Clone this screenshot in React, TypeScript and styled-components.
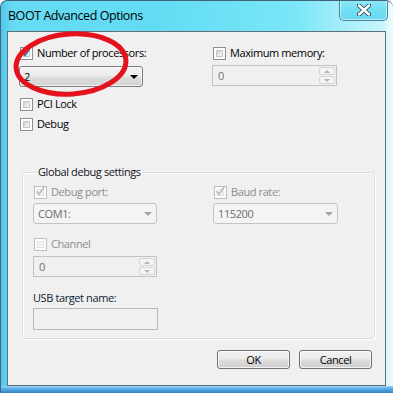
import React from "react";
import styled, { createGlobalStyle } from "styled-components";

const Global = createGlobalStyle`
  html, body { margin: 0; padding: 0; width: 393px; height: 393px; overflow: hidden; background: #fff; }
  body { font-family: "Open Sans", "Noto Sans", sans-serif; font-size: 11px; letter-spacing: -0.4px; color: #000; }
  * { box-sizing: border-box; }
`;

const Window = styled.div`
  position: relative;
  width: 393px;
  height: 393px;
  display: flex;
  flex-direction: column;
  border-left: 1px solid #3f6577;
  border-top: 1px solid #3f6577;
  border-radius: 7px 7px 0 0;
  overflow: hidden;
  background: linear-gradient(to right, #52c6ea 0%, #67dbf4 3%, #62dcf3 40%, #7ae6f8 75%, #c6f5fc 97%, #eefcfe 100%);
`;

const TitleBar = styled.div`
  height: 30px;
  display: flex;
  align-items: flex-start;
  flex-shrink: 0;
`;

const Title = styled.div`
  padding: 6px 0 0 7px;
  font-family: "Open Sans", "Noto Sans", sans-serif;
  font-size: 12.5px;
  color: #000;
  letter-spacing: -0.45px;
`;

const CloseButton = styled.div`
  margin-left: auto;
  margin-right: 5px;
  margin-top: -1px;
  width: 49px;
  height: 21px;
  border: 1px solid #4b8195;
  border-top: none;
  border-radius: 0 0 5px 5px;
  background: linear-gradient(#8eeafa, #72def3 50%, #66d9f1);
  box-shadow: inset 0 0 0 1px rgba(255, 255, 255, 0.55);
  display: flex;
  align-items: center;
  justify-content: center;
`;

const Body = styled.div`
  flex: 1;
  display: flex;
  padding: 0 7px 0 6px;
`;

const Client = styled.div`
  flex: 1;
  border: 1px solid #5f6e78;
  background: #f0f0f0;
  display: flex;
  flex-direction: column;
`;

const BottomEdge = styled.div`
  height: 7px;
  flex-shrink: 0;
  background: linear-gradient(#9fd8f3 0%, #5fb1e6 35%, #3d93d9 75%, #2f7fc4 100%);
`;

const TopSection = styled.div`
  display: grid;
  grid-template-columns: 193px 1fr;
  padding: 14px 0 0 11px;
`;

const Column = styled.div`
  display: flex;
  flex-direction: column;
  align-items: flex-start;
`;

const Slot = styled.div<{ $mt: number }>`
  margin-top: ${(p) => p.$mt}px;
`;

const CheckRow = styled.label<{ $disabled?: boolean }>`
  display: flex;
  align-items: center;
  height: 14px;
  gap: 4px;
  white-space: nowrap;
  color: ${(p) => (p.$disabled ? "#8c8c8c" : "#000")};
  line-height: 14px;
`;

const Box = styled.span<{ $disabled?: boolean }>`
  width: 13px;
  height: 13px;
  flex-shrink: 0;
  border: 1px solid ${(p) => (p.$disabled ? "#bdbdbd" : "#8e8f8f")};
  background: #fdfdfd;
  padding: 2px;
  display: flex;
  margin-left: 1px;
`;

const BoxInner = styled.span<{ $disabled?: boolean }>`
  flex: 1;
  border: 1px solid ${(p) => (p.$disabled ? "#e2e2e2" : "#c3c8cc")};
  background: ${(p) =>
    p.$disabled ? "#f3f3f3" : "linear-gradient(135deg, #c9cdd2 0%, #e8eaec 60%, #f8f8f8 100%)"};
  position: relative;
`;

const CheckMark = styled.svg`
  position: absolute;
  left: -3px;
  top: -4px;
  width: 10px;
  height: 10px;
  overflow: visible;
`;

const Combo = styled.div<{ $w: number; $disabled?: boolean }>`
  width: ${(p) => p.$w}px;
  height: 21px;
  border: 1px solid ${(p) => (p.$disabled ? "#c2c4c6" : "#7d7d7d")};
  border-radius: 3px;
  background: ${(p) =>
    p.$disabled
      ? "#f4f4f4"
      : "linear-gradient(#f4f4f4 0%, #ececec 45%, #dedede 55%, #d2d2d2 100%)"};
  box-shadow: ${(p) => (p.$disabled ? "none" : "inset 0 0 0 1px rgba(255,255,255,0.7)")};
  display: flex;
  align-items: center;
  padding: 0 4px 0 4px;
  color: ${(p) => (p.$disabled ? "#6d6d6d" : "#000")};
`;

const ComboText = styled.span`
  flex: 1;
`;

const Arrow = styled.span<{ $disabled?: boolean }>`
  width: 0;
  height: 0;
  border-left: 4px solid transparent;
  border-right: 4px solid transparent;
  border-top: 4px solid ${(p) => (p.$disabled ? "#a3a3a3" : "#000")};
`;

const Spin = styled.div<{ $w: number }>`
  width: ${(p) => p.$w}px;
  height: 21px;
  border: 1px solid #c0c2c4;
  background: #f0f0f0;
  display: flex;
  align-items: stretch;
  color: #707070;
`;

const SpinText = styled.span`
  flex: 1;
  padding-left: 5px;
  display: flex;
  align-items: center;
`;

const SpinButtons = styled.div`
  width: 17px;
  display: flex;
  flex-direction: column;
  padding: 1px 1px 1px 0;
  gap: 1px;
`;

const SpinButton = styled.div`
  flex: 1;
  border: 1px solid #d6d6d6;
  border-radius: 2px;
  background: #f4f4f4;
  display: flex;
  align-items: center;
  justify-content: center;
`;

const TinyArrow = styled.span<{ $up?: boolean }>`
  width: 0;
  height: 0;
  border-left: 3px solid transparent;
  border-right: 3px solid transparent;
  ${(p) => (p.$up ? "border-bottom: 3px solid #b5b5b5;" : "border-top: 3px solid #b5b5b5;")}
`;

const Group = styled.fieldset`
  margin: 34px 10px 0 14px;
  padding: 0 0 8px 10px;
  border: 1px solid #d5dfe5;
  border-radius: 3px;
  box-shadow: inset 1px 1px 0 #fff, 1px 1px 0 #fff;
  min-width: 0;
`;

const Legend = styled.legend`
  padding: 0 2px;
  margin-left: 3px;
  color: #10101a;
  font-size: 11px;
  line-height: 14px;
`;

const GroupGrid = styled.div`
  display: grid;
  grid-template-columns: 180px 1fr;
  padding-top: 6px;
`;

const FieldLabel = styled.div`
  color: #0c1a33;
  line-height: 15px;
  height: 15px;
`;

const TextBox = styled.div`
  width: 125px;
  height: 22px;
  border: 1px solid #b9b9b9;
  background: #f0f0f0;
`;

const ButtonRow = styled.div`
  display: flex;
  justify-content: flex-end;
  gap: 9px;
  padding: 11px 13px 0 0;
`;

const Button = styled.button`
  width: 73px;
  height: 19px;
  border: 1px solid #707070;
  border-radius: 3px;
  background: linear-gradient(#f2f2f2 0%, #ebebeb 48%, #dddddd 52%, #cfcfcf 100%);
  box-shadow: inset 0 0 0 1px rgba(255, 255, 255, 0.75);
  font-family: "Open Sans", "Noto Sans", sans-serif;
  font-size: 11px;
  letter-spacing: -0.4px;
  color: #000;
  padding: 0;
  line-height: 15px;
`;

const Highlight = styled.svg`
  position: absolute;
  left: 8px;
  top: 27px;
  width: 125px;
  height: 75px;
  pointer-events: none;
`;

function Check({ checked, disabled }: { checked?: boolean; disabled?: boolean }) {
  return (
    <Box $disabled={disabled}>
      <BoxInner $disabled={disabled}>
        {checked && (
          <CheckMark viewBox="0 0 10 10">
            <path
              d="M1.5 5.2 L4 8.3 L9.2 0.8"
              fill="none"
              stroke={disabled ? "#bcbcbc" : "#4a5f8a"}
              strokeWidth="1.7"
            />
          </CheckMark>
        )}
      </BoxInner>
    </Box>
  );
}

function SpinField({ w, value }: { w: number; value: string }) {
  return (
    <Spin $w={w}>
      <SpinText>{value}</SpinText>
      <SpinButtons>
        <SpinButton>
          <TinyArrow $up />
        </SpinButton>
        <SpinButton>
          <TinyArrow />
        </SpinButton>
      </SpinButtons>
    </Spin>
  );
}

export default function App() {
  return (
    <>
      <Global />
      <Window>
        <TitleBar>
          <Title>BOOT Advanced Options</Title>
          <CloseButton>
            <svg width="14" height="12" viewBox="0 0 14 12">
              <path
                d="M2 1.5 L12 10.5 M12 1.5 L2 10.5"
                stroke="#2f4a57"
                strokeWidth="4.2"
                strokeLinecap="round"
              />
              <path
                d="M2 1.5 L12 10.5 M12 1.5 L2 10.5"
                stroke="#ffffff"
                strokeWidth="2.4"
                strokeLinecap="round"
              />
            </svg>
          </CloseButton>
        </TitleBar>
        <Body>
          <Client>
            <TopSection>
              <Column>
                <CheckRow>
                  <Check checked />
                  Number of processors:
                </CheckRow>
                <Slot $mt={6}>
                  <Combo $w={124}>
                    <ComboText>2</ComboText>
                    <Arrow />
                  </Combo>
                </Slot>
                <Slot $mt={10}>
                  <CheckRow>
                    <Check />
                    PCI Lock
                  </CheckRow>
                </Slot>
                <Slot $mt={6}>
                  <CheckRow>
                    <Check />
                    Debug
                  </CheckRow>
                </Slot>
              </Column>
              <Column>
                <CheckRow>
                  <Check />
                  Maximum memory:
                </CheckRow>
                <Slot $mt={5}>
                  <SpinField w={125} value="0" />
                </Slot>
              </Column>
            </TopSection>
            <Group>
              <Legend>Global debug settings</Legend>
              <GroupGrid>
                <Column>
                  <CheckRow $disabled>
                    <Check checked disabled />
                    Debug port:
                  </CheckRow>
                  <Slot $mt={4}>
                    <Combo $w={124} $disabled>
                      <ComboText>COM1:</ComboText>
                      <Arrow $disabled />
                    </Combo>
                  </Slot>
                  <Slot $mt={13}>
                    <CheckRow $disabled>
                      <Check disabled />
                      Channel
                    </CheckRow>
                  </Slot>
                  <Slot $mt={5}>
                    <SpinField w={124} value="0" />
                  </Slot>
                  <Slot $mt={13}>
                    <FieldLabel>USB target name:</FieldLabel>
                  </Slot>
                  <Slot $mt={3}>
                    <TextBox />
                  </Slot>
                </Column>
                <Column>
                  <CheckRow $disabled>
                    <Check checked disabled />
                    Baud rate:
                  </CheckRow>
                  <Slot $mt={4}>
                    <Combo $w={125} $disabled>
                      <ComboText>115200</ComboText>
                      <Arrow $disabled />
                    </Combo>
                  </Slot>
                </Column>
              </GroupGrid>
            </Group>
            <ButtonRow>
              <Button>OK</Button>
              <Button>Cancel</Button>
            </ButtonRow>
          </Client>
        </Body>
        <BottomEdge />
        <Highlight viewBox="0 0 125 75">
          <ellipse
            cx="62"
            cy="36"
            rx="55"
            ry="30"
            fill="none"
            stroke="#e3121c"
            strokeWidth="5"
            transform="rotate(-4 62 36)"
          />
        </Highlight>
      </Window>
    </>
  );
}
